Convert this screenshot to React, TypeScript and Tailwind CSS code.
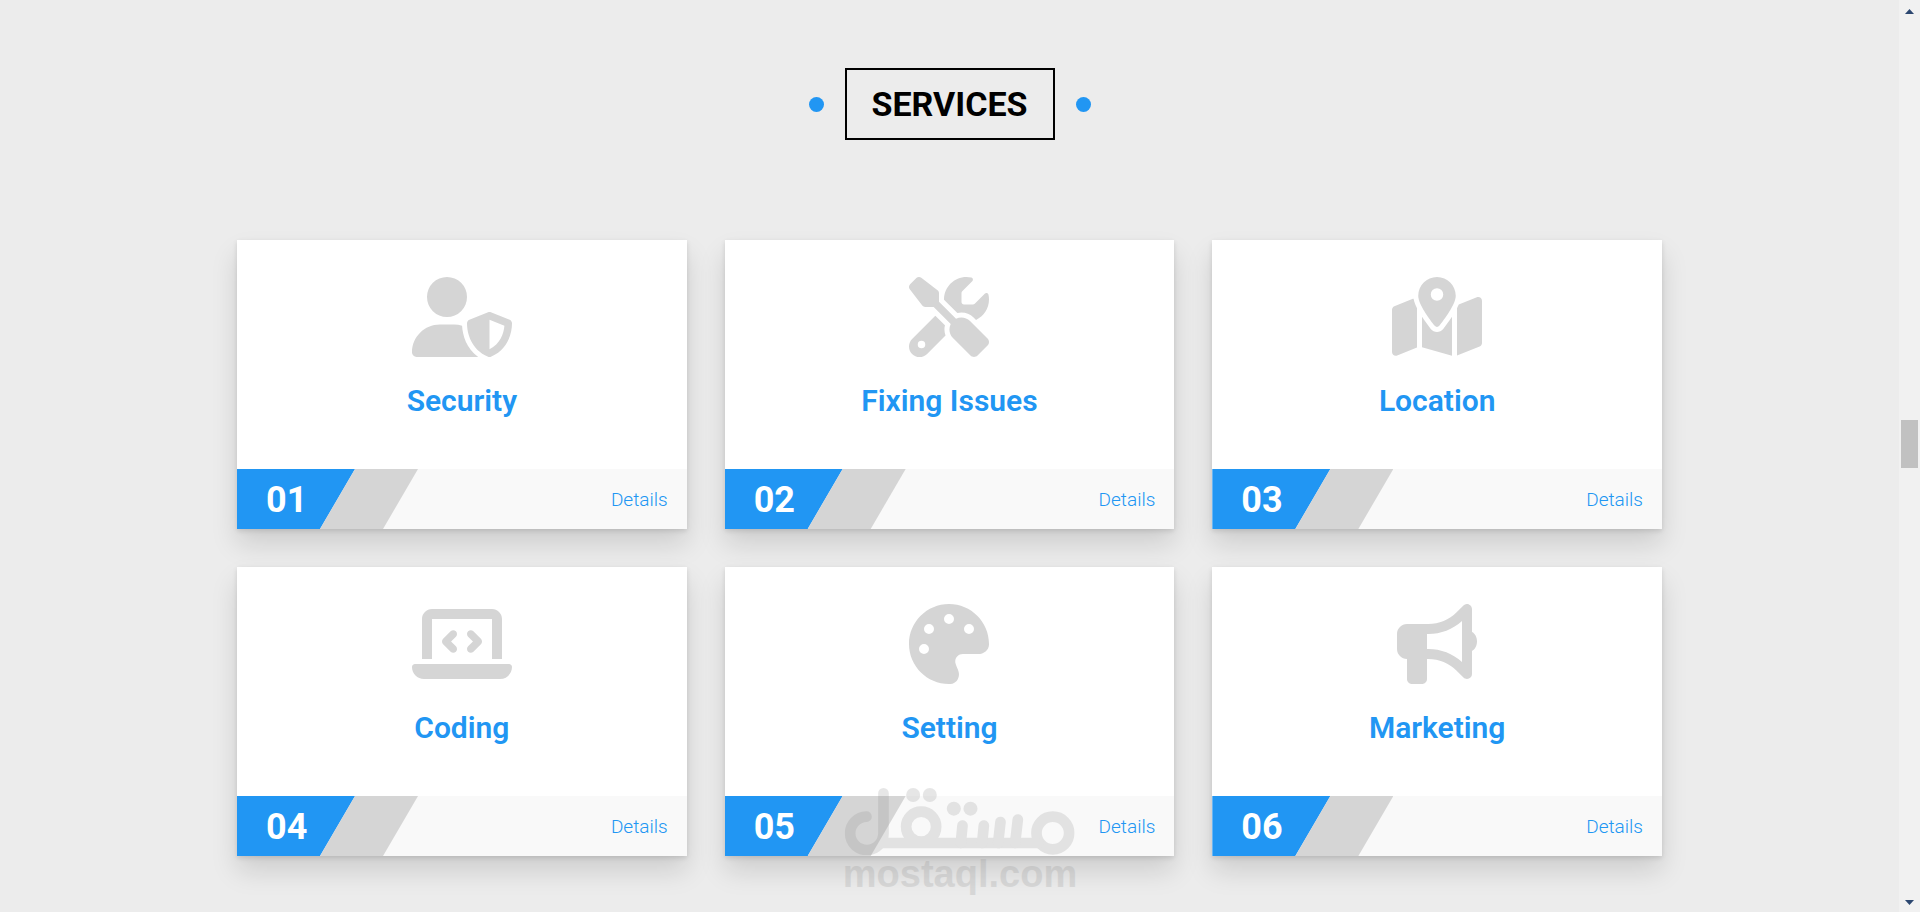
import React from "react";
import { IconType } from "react-icons";
import {
  FaBullhorn,
  FaLaptopCode,
  FaMapLocationDot,
  FaPalette,
  FaScrewdriverWrench,
  FaUserShield,
} from "react-icons/fa6";

interface IService {
  title: string;
  icon: IconType;
  iconWidth: string;
}

// the icons share a height, their widths follow each glyph
const services: IService[] = [
  { title: "Security", icon: FaUserShield, iconWidth: "w-[100px]" },
  { title: "Fixing Issues", icon: FaScrewdriverWrench, iconWidth: "w-20" },
  { title: "Location", icon: FaMapLocationDot, iconWidth: "w-[90px]" },
  { title: "Coding", icon: FaLaptopCode, iconWidth: "w-[100px]" },
  { title: "Setting", icon: FaPalette, iconWidth: "w-20" },
  { title: "Marketing", icon: FaBullhorn, iconWidth: "w-20" },
];

function App() {
  return (
    <div className="relative flex min-h-screen bg-[#ececec] font-['Roboto',sans-serif]">
      <main className="flex-1">
        <section id="services" className="px-4 pt-[68px] pb-14">
          <MainTitle>SERVICES</MainTitle>
          <div className="grid max-w-[1425px] grid-cols-1 gap-[38px] mx-auto mt-[100px] md:grid-cols-2 lg:grid-cols-3">
            {services.map((service, i) => (
              <ServiceCard key={service.title} service={service} number={i + 1} />
            ))}
          </div>
        </section>
      </main>
      <ScrollBar />
      <Watermark />
    </div>
  );
}

const MainTitle = ({ children }: { children: React.ReactNode }) => {
  return (
    <div className="flex items-center justify-center gap-[21px]">
      <span className="size-[15px] rounded-full bg-[#2196f3]" />
      <h2 className="px-[25px] py-2 text-[34px] leading-[52px] font-bold text-black border-2 border-black">
        {children}
      </h2>
      <span className="size-[15px] rounded-full bg-[#2196f3]" />
    </div>
  );
};

const ServiceCard = ({
  service,
  number,
}: {
  service: IService;
  number: number;
}) => {
  const Icon = service.icon;

  return (
    <article className="bg-white shadow-[0_15px_25px_rgba(0,0,0,0.13),0_2px_5px_rgba(0,0,0,0.12)]">
      <div className="flex flex-col items-center pt-[37px] pb-11">
        <Icon className={"h-20 text-[#d5d5d5] " + service.iconWidth} />
        <h3 className="mt-5 text-[30px] leading-[48px] font-semibold text-[#2196f3]">
          {service.title}
        </h3>
      </div>
      <div className="flex items-center h-[60px] bg-[#f9f9f9]">
        <span className="w-[118px] pt-0.5 pl-[29px] text-[36px] leading-[58px] font-bold text-white bg-[#2196f3] [clip-path:polygon(0_0,100%_0,83px_100%,0_100%)]">
          {String(number).padStart(2, "0")}
        </span>
        <span className="self-stretch w-[98px] -ml-[35px] bg-[#d5d5d5] [clip-path:polygon(35px_0,100%_0,63px_100%,0_100%)]" />
        <a
          href="#services"
          className="pt-0.5 ml-auto mr-[19px] text-[19px] leading-[28px] font-light text-[#2196f3]"
        >
          Details
        </a>
      </div>
    </article>
  );
};

const ScrollBar = () => {
  return (
    <div
      aria-hidden="true"
      className="flex flex-col items-center w-[21px] pt-[9px] pb-[7px] bg-[#f1f1f1]"
    >
      <svg width="9" height="5" viewBox="0 0 9 5" fill="#2c4770">
        <path d="M4.500 0 9 5H0z" />
      </svg>
      <div className="flex flex-col items-center flex-1 w-full py-1">
        <div className="flex-[402]" />
        <div className="w-[17px] h-12 bg-[#c1c1c1]" />
        <div className="flex-[428]" />
      </div>
      <svg width="9" height="5" viewBox="0 0 9 5" fill="#2c4770">
        <path d="M0 0h9L4.500 5z" />
      </svg>
    </div>
  );
};

const Watermark = () => {
  return (
    <div className="absolute bottom-[19px] left-1/2 flex flex-col items-center -translate-x-1/2 opacity-20 pointer-events-none">
      <svg
        width="230"
        height="67"
        viewBox="75 55 690 201"
        fill="none"
        stroke="#888"
        strokeWidth="32"
        strokeLinecap="round"
      >
        <g fill="#888" stroke="none">
          <circle cx="280" cy="76" r="21" />
          <circle cx="330" cy="76" r="21" />
          <circle cx="402" cy="117" r="21" />
          <circle cx="452" cy="117" r="21" />
        </g>
        <circle cx="304" cy="171" r="45" />
        <circle cx="699" cy="190" r="49" />
        <path d="M191 71V190A50 50 0 1 1 140 141" />
        <path d="M185 220H655" />
        <path d="M428 168 423 220M492 168 487 220M542 157 535 220M594 150 586 220" />
      </svg>
      <span className="font-['Liberation_Sans',sans-serif] text-[38px] leading-[38px] font-bold text-[#888]">
        mostaql.com
      </span>
    </div>
  );
};

export default App;
